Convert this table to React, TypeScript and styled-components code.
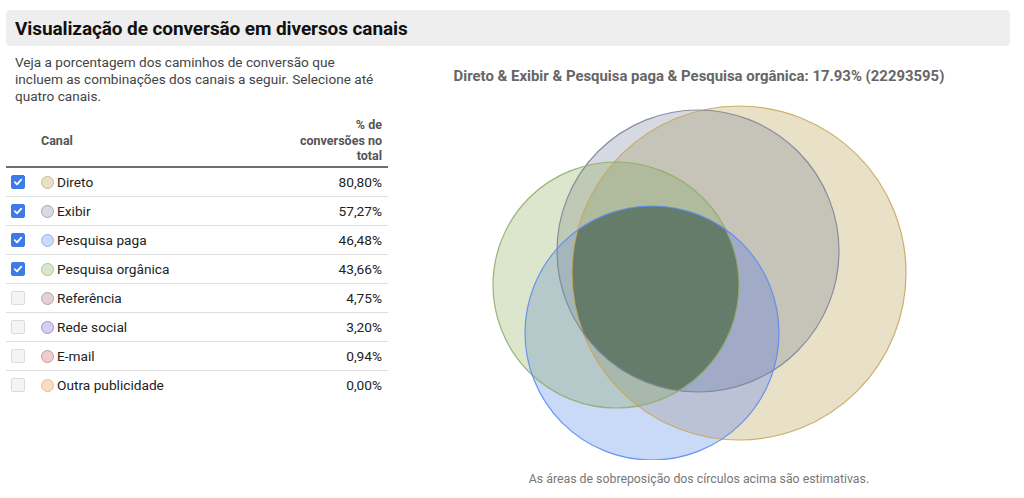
import styled, { createGlobalStyle } from "styled-components";

const GlobalStyle = createGlobalStyle`
  body {
    margin: 0;
    background: #fff;
    font-family: Roboto, "Liberation Sans", Arial, sans-serif;
    color: #222;
  }
`;

const Page = styled.div`
  padding: 10px 14px 0 6px;
  width: 1024px;
  box-sizing: border-box;
`;

const TitleBar = styled.div`
  background: #eeeeee;
  border-radius: 4px;
  height: 36px;
  display: flex;
  align-items: center;
  padding-left: 9px;
`;

const Title = styled.h1`
  margin: 0;
  font-size: 19px;
  font-weight: 700;
  color: #111;
  letter-spacing: -0.1px;
`;

const Body = styled.div`
  display: flex;
`;

const LeftCol = styled.div`
  width: 382px;
  flex: none;
`;

const Description = styled.p`
  margin: 8px 0 0 9px;
  width: 370px;
  font-size: 13.6px;
  line-height: 17px;
  color: #444;
`;

const HeaderRow = styled.div`
  margin-top: 10px;
  height: 51px;
  display: flex;
  align-items: center;
  border-bottom: 2px solid #6e6e6e;
  font-size: 12.5px;
  font-weight: 700;
  color: #555;
`;

const HeaderCanal = styled.div`
  padding-left: 35px;
  flex: 1;
`;

const HeaderPct = styled.div`
  text-align: right;
  width: 100px;
  padding-right: 6px;
  line-height: 15.5px;
`;

const Row = styled.div`
  height: 28px;
  display: flex;
  align-items: center;
  border-bottom: 1px solid #dedede;
  font-size: 13.7px;
  color: #222;
  &:last-child {
    border-bottom: none;
  }
`;

const Check = styled.span<{ $on: boolean }>`
  width: 14px;
  height: 14px;
  margin-left: 5px;
  margin-right: 16px;
  box-sizing: border-box;
  border-radius: 2px;
  display: flex;
  align-items: center;
  justify-content: center;
  background: ${(p) => (p.$on ? "#3c7be8" : "#f4f4f4")};
  border: 1px solid ${(p) => (p.$on ? "#3c7be8" : "#dcdcdc")};
`;

const Dot = styled.span<{ $fill: string; $edge: string }>`
  width: 13px;
  height: 13px;
  box-sizing: border-box;
  border-radius: 50%;
  background: ${(p) => p.$fill};
  border: 1px solid ${(p) => p.$edge};
  margin-right: 3px;
  flex: none;
`;

const Label = styled.span`
  flex: 1;
`;

const Pct = styled.span`
  padding-right: 6px;
`;

const RightCol = styled.div`
  flex: 1;
  display: flex;
  flex-direction: column;
  align-items: center;
`;

const ChartTitle = styled.div`
  margin-top: 22px;
  font-size: 14.9px;
  font-weight: 700;
  color: #666;
  line-height: 16px;
`;

const Chart = styled.svg`
  display: block;
  margin-top: 14px;
`;

const Note = styled.div`
  margin-top: 12px;
  font-size: 12.3px;
  color: #777;
`;

const channels = [
  { name: "Direto", pct: "80,80%", on: true, fill: "#e8e0c6", edge: "#cbb98a" },
  { name: "Exibir", pct: "57,27%", on: true, fill: "#d8dbe3", edge: "#a3a8b4" },
  { name: "Pesquisa paga", pct: "46,48%", on: true, fill: "#cadaf8", edge: "#92b2ee" },
  { name: "Pesquisa orgânica", pct: "43,66%", on: true, fill: "#dbe7cd", edge: "#a9c48e" },
  { name: "Referência", pct: "4,75%", on: false, fill: "#e3d1d4", edge: "#bba1a6" },
  { name: "Rede social", pct: "3,20%", on: false, fill: "#d7cff0", edge: "#9c8ed2" },
  { name: "E-mail", pct: "0,94%", on: false, fill: "#f1cccc", edge: "#d88f8f" },
  { name: "Outra publicidade", pct: "0,00%", on: false, fill: "#f8dcc6", edge: "#f0b593" },
];

type Key = "D" | "E" | "O" | "P";

// D = Direto, E = Exibir, O = Pesquisa orgânica, P = Pesquisa paga
const circles: Record<Key, { cx: number; cy: number; r: number; stroke: string }> = {
  D: { cx: 351, cy: 175, r: 167, stroke: "#c6a95a" },
  E: { cx: 310, cy: 153, r: 141, stroke: "#7d8498" },
  O: { cx: 228, cy: 187, r: 123, stroke: "#91ad6c" },
  P: { cx: 264, cy: 235, r: 127, stroke: "#5c8df0" },
};

// painted from single sets up to the full intersection
const regions: { sets: Key[]; fill: string }[] = [
  { sets: ["D"], fill: "#e8e1c8" },
  { sets: ["E"], fill: "#d6d9e2" },
  { sets: ["O"], fill: "#dbe6cc" },
  { sets: ["P"], fill: "#c9d9f8" },
  { sets: ["D", "E"], fill: "#c6c4b8" },
  { sets: ["D", "O"], fill: "#c3c8ae" },
  { sets: ["D", "P"], fill: "#bcc2d6" },
  { sets: ["E", "O"], fill: "#bfcab6" },
  { sets: ["E", "P"], fill: "#b2bdd6" },
  { sets: ["O", "P"], fill: "#b5c9cb" },
  { sets: ["D", "E", "O"], fill: "#b0ba9c" },
  { sets: ["D", "E", "P"], fill: "#a1aac6" },
  { sets: ["D", "O", "P"], fill: "#a8b8ad" },
  { sets: ["E", "O", "P"], fill: "#a2b6bb" },
  { sets: ["D", "E", "O", "P"], fill: "#667c6a" },
];

function CheckMark() {
  return (
    <svg width="10" height="10" viewBox="0 0 10 10">
      <path d="M1.8 5.2 L4 7.3 L8.3 2.6" fill="none" stroke="#fff" strokeWidth="1.8" strokeLinecap="round" strokeLinejoin="round" />
    </svg>
  );
}

function Region({ sets, fill }: { sets: Key[]; fill: string }) {
  const last = circles[sets[sets.length - 1]];
  let node = <circle cx={last.cx} cy={last.cy} r={last.r} fill={fill} />;
  for (let i = sets.length - 2; i >= 0; i--) {
    node = <g clipPath={`url(#clip${sets[i]})`}>{node}</g>;
  }
  return node;
}

function Venn() {
  const keys = Object.keys(circles) as Key[];
  return (
    <Chart width="622" height="362" viewBox="0 0 622 362">
      <defs>
        {keys.map((k) => (
          <clipPath id={`clip${k}`} key={k}>
            <circle cx={circles[k].cx} cy={circles[k].cy} r={circles[k].r} />
          </clipPath>
        ))}
      </defs>
      {regions.map((r) => (
        <Region key={r.sets.join("")} sets={r.sets} fill={r.fill} />
      ))}
      {keys.map((k) => (
        <circle key={"s" + k} cx={circles[k].cx} cy={circles[k].cy} r={circles[k].r} fill="none" stroke={circles[k].stroke} strokeWidth="1.2" opacity="0.9" />
      ))}
    </Chart>
  );
}

export default function App() {
  return (
    <Page>
      <GlobalStyle />
      <TitleBar>
        <Title>Visualização de conversão em diversos canais</Title>
      </TitleBar>
      <Body>
        <LeftCol>
          <Description>
            Veja a porcentagem dos caminhos de conversão que incluem as combinações dos canais a seguir. Selecione até
            quatro canais.
          </Description>
          <HeaderRow>
            <HeaderCanal>Canal</HeaderCanal>
            <HeaderPct>
              % de
              <br />
              conversões no
              <br />
              total
            </HeaderPct>
          </HeaderRow>
          {channels.map((c) => (
            <Row key={c.name}>
              <Check $on={c.on}>{c.on && <CheckMark />}</Check>
              <Dot $fill={c.fill} $edge={c.edge} />
              <Label>{c.name}</Label>
              <Pct>{c.pct}</Pct>
            </Row>
          ))}
        </LeftCol>
        <RightCol>
          <ChartTitle>Direto &amp; Exibir &amp; Pesquisa paga &amp; Pesquisa orgânica: 17.93% (22293595)</ChartTitle>
          <Venn />
          <Note>As áreas de sobreposição dos círculos acima são estimativas.</Note>
        </RightCol>
      </Body>
    </Page>
  );
}
